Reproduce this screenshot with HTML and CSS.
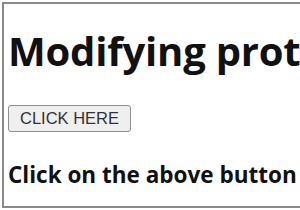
FILE: index.html
```html
<!DOCTYPE html>
<html lang="en">
<head>
    <meta charset="UTF-8">
    <title>Modifying prototype</title>
    <link rel="stylesheet" href="styles.css">
</head>
<body>
    <div class="frame">
        <h1>Modifying prot</h1>
        <button class="click-btn">CLICK HERE</button>
        <p class="note">Click on the above button</p>
    </div>
</body>
</html>
```
FILE: styles.css
```css
body {
    margin: 0;
    padding: 2px 0 0 2px;
    background-color: #fff;
    overflow: hidden;
}
.frame {
    height: 202px;
    border: 2px solid #8a8a8a;
    border-right: none;
    padding: 0 0 0 4px;
    font-family: "Open Sans", sans-serif;
    color: #111;
    overflow: hidden;
}
h1 {
    margin: 22px 0 0 0;
    font-size: 40px;
    font-weight: bold;
    line-height: 50px;
    white-space: nowrap;
    letter-spacing: -0.2px;
}
.click-btn {
    margin: 29px 0 0 0;
    font-family: Arial, "Liberation Sans", sans-serif;
    font-size: 16.5px;
    line-height: 19px;
    color: #333;
    background-color: #efefef;
    border: 1px solid #8f8f8f;
    border-radius: 3px;
    padding: 3px 11px;
}
.note {
    margin: 27px 0 0 0;
    font-size: 22.5px;
    font-weight: bold;
    white-space: nowrap;
}
```
